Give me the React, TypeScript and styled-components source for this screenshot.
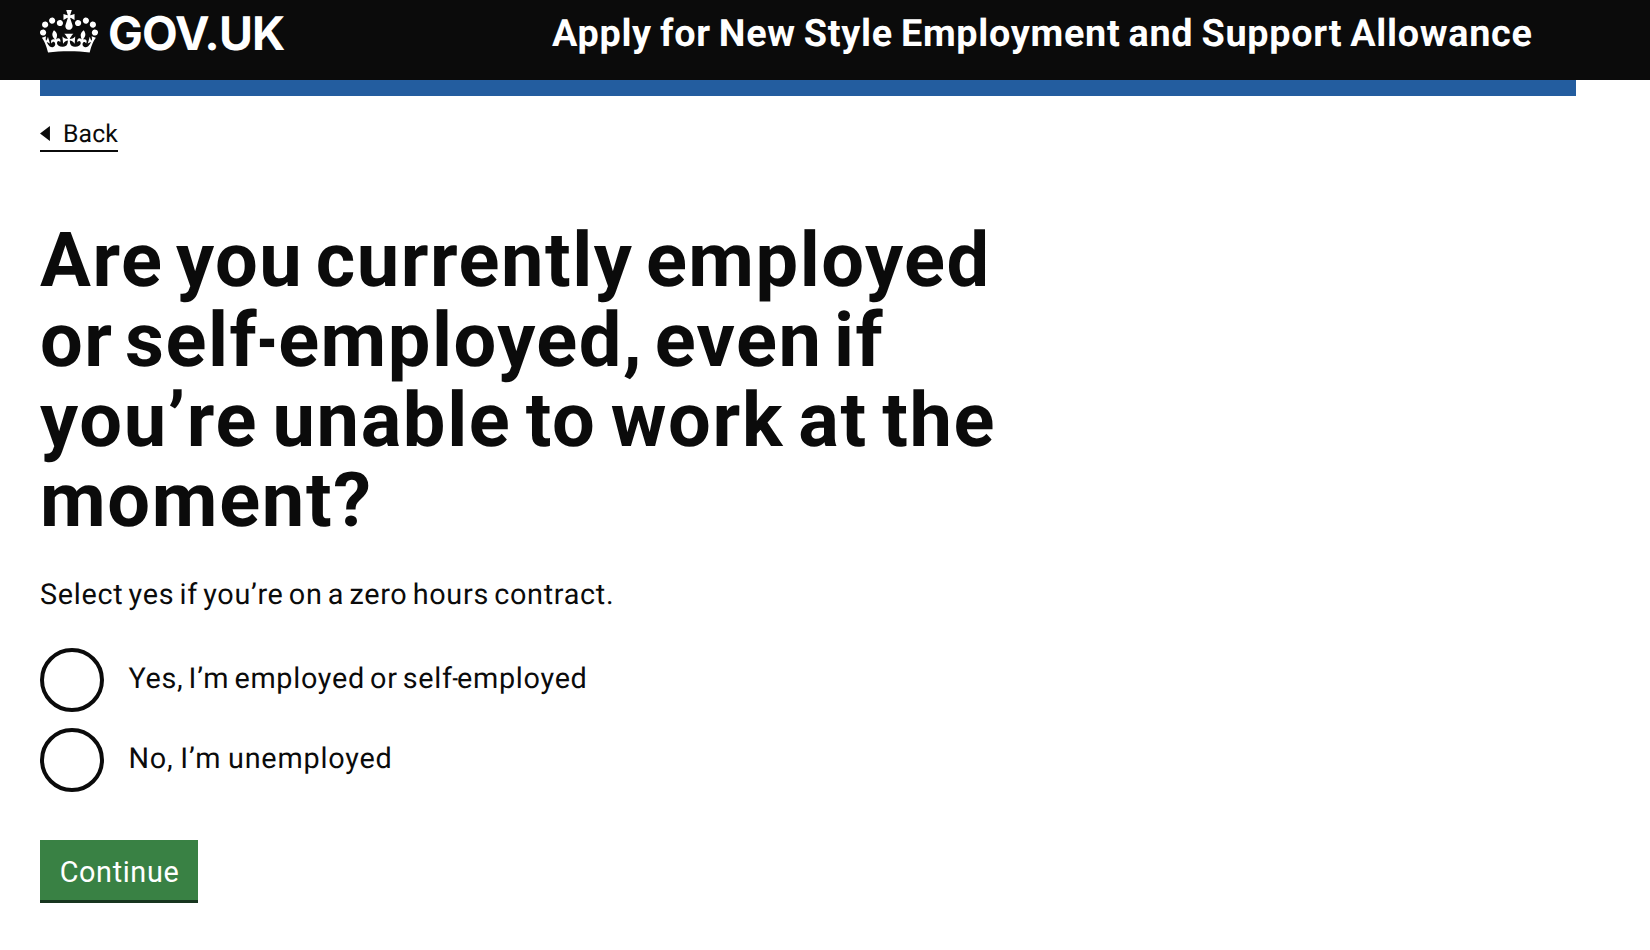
import React from 'react';
import styled, { createGlobalStyle } from 'styled-components';

const ink = '#0b0b0b';

const GlobalStyle = createGlobalStyle`
  * { box-sizing: border-box; }
  body {
    margin: 0;
    background: #fff;
    color: ${ink};
    font-family: Roboto, "Liberation Sans", sans-serif;
    text-rendering: geometricPrecision;
  }
`;

/* letter and word spacing that tune the width of one run of text */
interface Tracking {
  $letter?: number;
  $word?: number;
}

const Tracked = styled.span<Tracking>`
  letter-spacing: ${(p) => p.$letter ?? 0}px;
  word-spacing: ${(p) => p.$word ?? 0}px;
  white-space: nowrap;
`;

/* a short hyphen that sits tight between its neighbours */
const Hyphen = styled.span`
  display: inline-block;
  margin: 0 -0.075em;
  transform: scaleX(0.68);
`;

const Header = styled.header`
  height: 80px;
  padding: 0 40px;
  display: flex;
  align-items: flex-start;
  background: ${ink};
  color: #fff;
`;

const LogoLink = styled.a`
  width: 512px;
  padding-top: 10px;
  display: flex;
  gap: 10px;
  color: inherit;
  text-decoration: none;
`;

const Crown = styled.svg`
  width: 58px;
  height: 43px;
  flex: none;
  fill: currentColor;
`;

const LogoText = styled.span`
  padding-top: 1px;
  font: 700 46.4px/46px Inter, "Liberation Sans", sans-serif;
  letter-spacing: -0.85px;
`;

const ServiceName = styled.a`
  padding-top: 14px;
  font-size: 37.8px;
  line-height: 40px;
  font-weight: 700;
  color: inherit;
  text-decoration: none;
`;

const Container = styled.div`
  width: 1536px;
  margin-left: 40px;
`;

const BlueBar = styled.div`
  height: 16px;
  background: #235d9f;
`;

const BackLink = styled.a`
  width: 78px;
  height: 34px;
  margin-top: 22px;
  display: flex;
  align-items: flex-start;
  border-bottom: 2px solid ${ink};
  color: inherit;
  font-size: 24.8px;
  line-height: 34px;
  text-decoration: none;
`;

const BackArrow = styled.svg`
  width: 10px;
  height: 15px;
  margin: 8px 13px 0 0;
  fill: ${ink};
`;

const Main = styled.main`
  padding-top: 69px;
`;

const Heading = styled.h1`
  margin: 0;
  display: flex;
  flex-direction: column;
  align-items: flex-start;
  font-size: 75.8px;
  line-height: 80px;
  font-weight: 700;
`;

const Hint = styled.p`
  margin: 34px 0 0;
  font-size: 28.8px;
  line-height: 40px;
`;

const RadioList = styled.div`
  margin-top: 33px;
  display: flex;
  flex-direction: column;
  gap: 16px;
`;

const RadioItem = styled.label`
  height: 64px;
  display: flex;
  gap: 24.5px;
  font-size: 28.8px;
  line-height: 62px;
`;

const RadioInput = styled.input`
  appearance: none;
  width: 64px;
  height: 64px;
  margin: 0;
  flex: none;
  border: 4px solid ${ink};
  border-radius: 50%;
`;

const ContinueButton = styled.button`
  width: 158px;
  height: 63px;
  margin: 48px 0 0;
  padding: 4px 0 0 1px;
  display: flex;
  justify-content: center;
  align-items: center;
  border: 0;
  border-bottom: 3px solid #17351f;
  background: #398144;
  color: #fff;
  font: 400 28.8px/40px Roboto, "Liberation Sans", sans-serif;
`;

const headingLines = [
  { id: 1, text: 'Are you currently employed', letter: 1.5, word: -7.8 },
  {
    id: 2,
    text: <>or self<Hyphen>-</Hyphen>employed, even if</>,
    letter: 1.5,
    word: -8.8,
  },
  { id: 3, text: 'you’re unable to work at the', letter: 1.65, word: -6.2 },
  { id: 4, text: 'moment?', letter: 1.7, word: 0 },
];

const answers = [
  {
    id: 'yes',
    text: <>Yes, I’m employed or self<Hyphen>-</Hyphen>employed</>,
    letter: 0.7,
    word: -2.7,
  },
  { id: 'no', text: 'No, I’m unemployed', letter: 0.8, word: -1.2 },
];

export default function App() {
  return (
    <>
      <GlobalStyle />
      <Header>
        <LogoLink href="#">
          <Crown viewBox="0 0 132 97" preserveAspectRatio="none" aria-hidden="true">
            <path fillRule="evenodd" d="M25 30.2c3.5 1.5 7.7-.2 9.1-3.7 1.5-3.6-.2-7.8-3.9-9.2-3.6-1.4-7.6.3-9.1 3.9-1.4 3.5.3 7.5 3.9 9zM9 39.5c3.6 1.5 7.8-.2 9.2-3.7 1.5-3.6-.2-7.8-3.9-9.1-3.6-1.5-7.6.2-9.1 3.8-1.4 3.5.3 7.5 3.8 9zM4.4 57.2c3.5 1.5 7.7-.2 9.1-3.8 1.5-3.6-.2-7.7-3.9-9.1-3.5-1.5-7.6.3-9.1 3.8-1.4 3.5.3 7.6 3.9 9.1zm38.3-21.4c3.5 1.5 7.7-.2 9.1-3.8 1.5-3.6-.2-7.7-3.9-9.1-3.6-1.5-7.6.3-9.1 3.8-1.3 3.6.4 7.7 3.9 9.1zm64.4-5.6c-3.6 1.5-7.8-.2-9.1-3.7-1.5-3.6.2-7.8 3.8-9.2 3.6-1.4 7.7.3 9.2 3.9 1.3 3.5-.4 7.5-3.9 9zm15.9 9.3c-3.6 1.5-7.7-.2-9.1-3.7-1.5-3.6.2-7.8 3.7-9.1 3.6-1.5 7.7.2 9.2 3.8 1.5 3.5-.3 7.5-3.8 9zm4.7 17.7c-3.6 1.5-7.8-.2-9.2-3.8-1.5-3.6.2-7.7 3.9-9.1 3.6-1.5 7.7.3 9.2 3.8 1.3 3.5-.4 7.6-3.9 9.1zM89.3 35.8c-3.6 1.5-7.8-.2-9.2-3.8-1.4-3.6.2-7.7 3.9-9.1 3.6-1.5 7.7.3 9.2 3.8 1.4 3.6-.3 7.7-3.9 9.1zM69.7 17.7l8.9 4.7V9.3l-8.9 2.8c-.2-.3-.5-.6-.9-.9L72.4 0H59.6l3.5 11.2c-.3.3-.6.5-.9.9l-8.8-2.8v13.1l8.8-4.7c.3.3.6.7.9.9l-5 15.4v.1c-.2.8-.4 1.6-.4 2.4 0 4.1 3.1 7.5 7 8.1h.2c.3 0 .7.1 1 .1.4 0 .7 0 1-.1h.2c4-.6 7.1-4.1 7.1-8.1 0-.8-.1-1.7-.4-2.4V34l-5.1-15.4c.4-.2.7-.6 1-.9zM66 92.8c16.9 0 32.8 1.1 47.1 3.2 4-16.9 8.9-26.7 14-33.5l-9.6-3.4c1 4.9 1.1 7.2 0 10.2-1.5-1.4-3-4.3-4.2-8.7L108.6 76c2.8-2 5-3.2 7.5-3.3-4.4 9.4-10 11.9-13.6 11.2-4.3-.8-6.3-4.6-5.6-7.9 1-4.7 5.7-5.9 8-.5 4.3-8.7-3-11.4-7.6-8.8 7.1-7.2 7.9-13.5 2.1-21.1-8 6.1-8.1 12.3-4.5 20.8-4.7-5.4-12.1-2.5-9.5 6.2 3.4-5.2 7.9-2 7.2 3.1-.6 4.3-6.4 7.8-13.5 7.2-10.3-.9-10.9-8-11.2-13.8 2.5-.5 7.1 1.8 11 7.3L80.2 60c-4.1 4.4-8 5.3-12.3 5.4 1.4-4.4 8-11.6 8-11.6H55.5s6.4 7.2 7.9 11.6c-4.2-.1-8-1-12.3-5.4l1.4 16.4c3.9-5.5 8.5-7.7 10.9-7.3-.3 5.8-.9 12.8-11.1 13.8-7.2.6-12.9-2.9-13.5-7.2-.7-5 3.8-8.3 7.1-3.1 2.7-8.7-4.6-11.6-9.4-6.2 3.7-8.5 3.6-14.7-4.6-20.8-5.8 7.6-5 13.9 2.2 21.1-4.7-2.6-11.9.1-7.7 8.8 2.3-5.5 7.1-4.2 8.1.5.7 3.3-1.3 7.1-5.7 7.9-3.5.7-9-1.8-13.5-11.2 2.5.1 4.7 1.3 7.5 3.3l-4.7-15.4c-1.2 4.4-2.7 7.2-4.3 8.7-1.1-3-.9-5.3 0-10.2l-9.5 3.4c5 6.9 9.9 16.7 14 33.5 14.8-2.1 30.8-3.2 47.7-3.2z" />
          </Crown>
          <LogoText>GOV.UK</LogoText>
        </LogoLink>
        <ServiceName href="#">
          <Tracked $letter={0.7} $word={-2}>
            Apply for New Style Employment and Support Allowance
          </Tracked>
        </ServiceName>
      </Header>
      <Container>
        <BlueBar />
        <BackLink href="#">
          <BackArrow viewBox="0 0 10 15" aria-hidden="true">
            <path d="M0 7.5 10 0v15z" />
          </BackArrow>
          <Tracked $letter={0.15}>Back</Tracked>
        </BackLink>
        <Main>
          <Heading>
            {headingLines.map((line) => (
              <Tracked key={line.id} $letter={line.letter} $word={line.word}>
                {line.text}
              </Tracked>
            ))}
          </Heading>
          <Hint>
            <Tracked $letter={0.7} $word={-2.6}>
              Select yes if you’re on a zero hours contract.
            </Tracked>
          </Hint>
          <RadioList>
            {answers.map((answer) => (
              <RadioItem key={answer.id}>
                <RadioInput type="radio" name="employed" value={answer.id} />
                <Tracked $letter={answer.letter} $word={answer.word}>
                  {answer.text}
                </Tracked>
              </RadioItem>
            ))}
          </RadioList>
          <ContinueButton type="button">
            <Tracked $letter={0.65}>Continue</Tracked>
          </ContinueButton>
        </Main>
      </Container>
    </>
  );
}
